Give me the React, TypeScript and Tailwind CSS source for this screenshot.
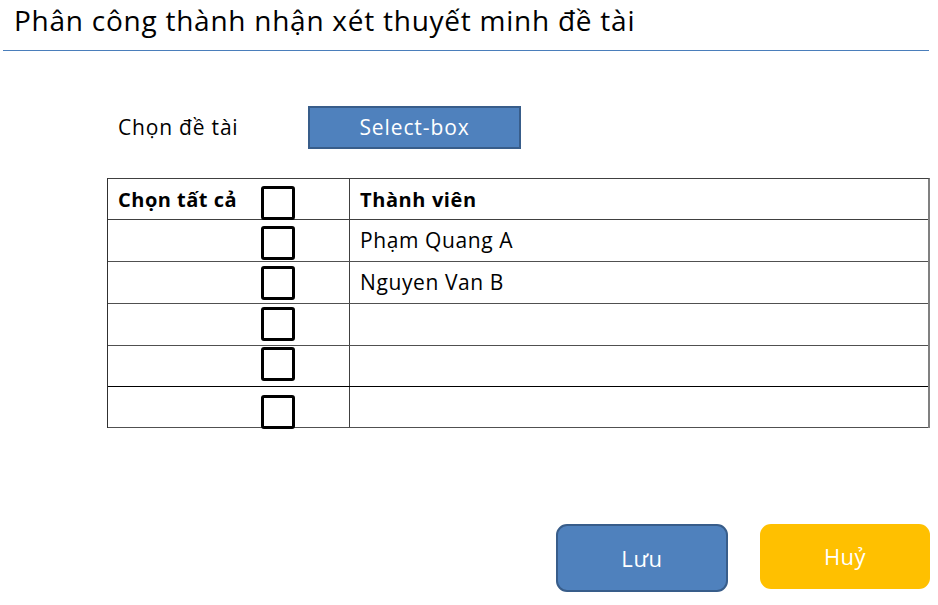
type Row = { name: string; boxTop: string; h: string };

const rows: Row[] = [
  { name: "Phạm Quang A", boxTop: "mt-[6px]", h: "h-[42px]" },
  { name: "Nguyen Van B", boxTop: "mt-[4px]", h: "h-[42px]" },
  { name: "", boxTop: "mt-[3px]", h: "h-[42px]" },
  { name: "", boxTop: "mt-[1px]", h: "h-[41px]" },
  { name: "", boxTop: "mt-[8px]", h: "h-[41px]" },
];

function Box({ top }: { top: string }) {
  return (
    <span
      className={`relative z-10 block h-[34px] w-[34px] shrink-0 rounded-[3px] border-[3px] border-black bg-white ${top}`}
    />
  );
}

export default function App() {
  return (
    <div className="h-[605px] w-[938px] overflow-hidden bg-white font-['Open_Sans',sans-serif] text-black">
      {/* title */}
      <h1 className="pl-[14px] pt-0 text-[28px] leading-[40px] tracking-[0.75px]">
        Phân công thành nhận xét thuyết minh đề tài
      </h1>
      <div className="ml-[3px] mt-[10px] h-[1px] w-[926px] bg-[#4a7ebb]" />

      {/* topic picker */}
      <div className="mt-[55px] flex items-center">
        <span className="ml-[118px] w-[190px] text-[21px] tracking-[0.8px]">Chọn đề tài</span>
        <div className="flex h-[43px] w-[213px] items-center justify-center border-2 border-[#385d8a] bg-[#4f81bd] text-[21px] tracking-[0.9px] text-white">
          Select-box
        </div>
      </div>

      {/* member table */}
      <div className="ml-[107px] mt-[29px] w-[823px] border-l border-r-2 border-t border-l-[#303030] border-r-[#808080] border-t-[#404040]">
        <div className="flex h-[41px] border-b border-[#404040]">
          <div className="flex w-[242px] border-r border-[#404040]">
            <span className="w-[153px] pl-[10px] pt-[6px] text-[20px] font-bold tracking-[0.5px]">
              Chọn tất cả
            </span>
            <Box top="mt-[7px]" />
          </div>
          <div className="pl-[10px] pt-[6px] text-[20px] font-bold tracking-[0.6px]">Thành viên</div>
        </div>
        {rows.map((r, i) => (
          <div
            key={i}
            className={`flex ${r.h} border-b ${i === 3 ? "border-[#000000]" : "border-[#505050]"}`}
          >
            <div className="flex w-[242px] border-r border-[#404040]">
              <span className="w-[153px]" />
              <Box top={r.boxTop} />
            </div>
            <div className="pl-[10px] pt-[5px] text-[21px] tracking-[0.6px]">{r.name}</div>
          </div>
        ))}
      </div>

      {/* actions */}
      <div className="mt-[96px] flex justify-end gap-[32px] pr-[8px]">
        <button className="flex h-[68px] w-[172px] items-center justify-center rounded-[11px] border-2 border-[#385d8a] bg-[#4f81bd] text-[22px] tracking-[0.6px] text-white">
          Lưu
        </button>
        <button className="flex h-[65px] w-[170px] items-center justify-center rounded-[11px] bg-[#ffc000] text-[22px] tracking-[0.5px] text-white">
          Huỷ
        </button>
      </div>
    </div>
  );
}
